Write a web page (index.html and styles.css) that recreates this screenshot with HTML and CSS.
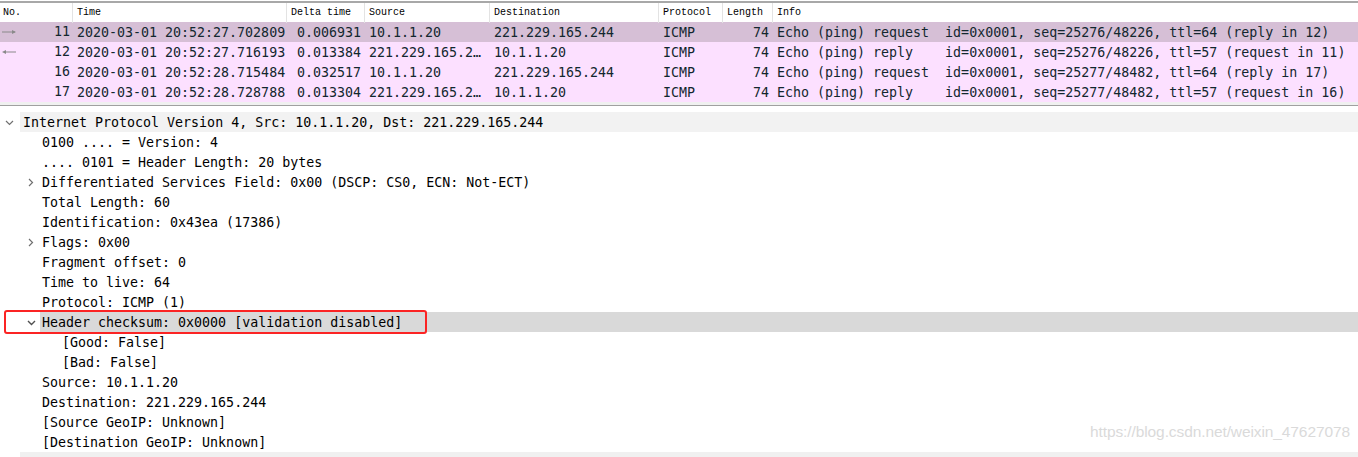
FILE: index.html
```html
<!DOCTYPE html>
<html>
<head>
<meta charset="utf-8">
<link rel="stylesheet" href="styles.css">
</head>
<body>
<div class="packets">
  <div class="topline"></div>
  <div class="grid phead">
    <div class="hc">No.</div>
    <div class="hc">Time</div>
    <div class="hc">Delta time</div>
    <div class="hc">Source</div>
    <div class="hc">Destination</div>
    <div class="hc">Protocol</div>
    <div class="hc">Length</div>
    <div class="hc">Info</div>
  </div>
  <div class="grid prow sel">
    <div class="c no"><svg class="rel" width="18" height="8" viewBox="0 0 18 8"><path d="M2 4H15" stroke="#8a8a8a" stroke-width="1"/><path d="M12 2L16 4L12 6Z" fill="#8a8a8a"/></svg><span>11</span></div>
    <div class="c">2020-03-01 20:52:27.702809</div>
    <div class="c r">0.006931</div>
    <div class="c">10.1.1.20</div>
    <div class="c">221.229.165.244</div>
    <div class="c">ICMP</div>
    <div class="c r">74</div>
    <div class="c info">Echo (ping) request  id=0x0001, seq=25276/48226, ttl=64 (reply in 12)</div>
  </div>
  <div class="grid prow">
    <div class="c no"><svg class="rel" width="18" height="8" viewBox="0 0 18 8"><path d="M4 4H16" stroke="#8a8a8a" stroke-width="1"/><path d="M6 2L2 4L6 6Z" fill="#8a8a8a"/></svg><span>12</span></div>
    <div class="c">2020-03-01 20:52:27.716193</div>
    <div class="c r">0.013384</div>
    <div class="c">221.229.165.2…</div>
    <div class="c">10.1.1.20</div>
    <div class="c">ICMP</div>
    <div class="c r">74</div>
    <div class="c info">Echo (ping) reply    id=0x0001, seq=25276/48226, ttl=57 (request in 11)</div>
  </div>
  <div class="grid prow">
    <div class="c no"><span>16</span></div>
    <div class="c">2020-03-01 20:52:28.715484</div>
    <div class="c r">0.032517</div>
    <div class="c">10.1.1.20</div>
    <div class="c">221.229.165.244</div>
    <div class="c">ICMP</div>
    <div class="c r">74</div>
    <div class="c info">Echo (ping) request  id=0x0001, seq=25277/48482, ttl=64 (reply in 17)</div>
  </div>
  <div class="grid prow">
    <div class="c no"><span>17</span></div>
    <div class="c">2020-03-01 20:52:28.728788</div>
    <div class="c r">0.013304</div>
    <div class="c">221.229.165.2…</div>
    <div class="c">10.1.1.20</div>
    <div class="c">ICMP</div>
    <div class="c r">74</div>
    <div class="c info">Echo (ping) reply    id=0x0001, seq=25277/48482, ttl=57 (request in 16)</div>
  </div>
  <div class="pfoot"></div>
</div>
<div class="split"></div>
<div class="tree">
  <div class="tr l0"><div class="br"><span class="tog"><svg width="9" height="6" viewBox="0 0 9 6"><path d="M1 1L4.5 4.5L8 1" fill="none" stroke="#707070" stroke-width="1.2"/></svg></span></div><div class="lb hov">Internet Protocol Version 4, Src: 10.1.1.20, Dst: 221.229.165.244</div></div>
  <div class="tr l1"><div class="br"></div><div class="lb">0100 .... = Version: 4</div></div>
  <div class="tr l1"><div class="br"></div><div class="lb">.... 0101 = Header Length: 20 bytes</div></div>
  <div class="tr l1"><div class="br"><span class="tog"><svg width="6" height="9" viewBox="0 0 6 9"><path d="M1 1L4.5 4.5L1 8" fill="none" stroke="#707070" stroke-width="1.2"/></svg></span></div><div class="lb">Differentiated Services Field: 0x00 (DSCP: CS0, ECN: Not-ECT)</div></div>
  <div class="tr l1"><div class="br"></div><div class="lb">Total Length: 60</div></div>
  <div class="tr l1"><div class="br"></div><div class="lb">Identification: 0x43ea (17386)</div></div>
  <div class="tr l1"><div class="br"><span class="tog"><svg width="6" height="9" viewBox="0 0 6 9"><path d="M1 1L4.5 4.5L1 8" fill="none" stroke="#707070" stroke-width="1.2"/></svg></span></div><div class="lb">Flags: 0x00</div></div>
  <div class="tr l1"><div class="br"></div><div class="lb">Fragment offset: 0</div></div>
  <div class="tr l1"><div class="br"></div><div class="lb">Time to live: 64</div></div>
  <div class="tr l1"><div class="br"></div><div class="lb">Protocol: ICMP (1)</div></div>
  <div class="tr l1 mark"><div class="br"><span class="tog"><svg width="9" height="6" viewBox="0 0 9 6"><path d="M1 1L4.5 4.5L8 1" fill="none" stroke="#505050" stroke-width="1.4"/></svg></span></div><div class="lb selb">Header checksum: 0x0000 [validation disabled]</div><div class="redbox"></div></div>
  <div class="tr l2"><div class="br"></div><div class="lb">[Good: False]</div></div>
  <div class="tr l2"><div class="br"></div><div class="lb">[Bad: False]</div></div>
  <div class="tr l1"><div class="br"></div><div class="lb">Source: 10.1.1.20</div></div>
  <div class="tr l1"><div class="br"></div><div class="lb">Destination: 221.229.165.244</div></div>
  <div class="tr l1"><div class="br"></div><div class="lb">[Source GeoIP: Unknown]</div></div>
  <div class="tr l1"><div class="br"></div><div class="lb">[Destination GeoIP: Unknown]</div></div>
  <div class="hscroll"></div>
  <div class="watermark">https://blog.csdn.net/weixin_47627078</div>
</div>
</body>
</html>
```
FILE: styles.css
```css
html, body {
  margin: 0;
  padding: 0;
  background: #ffffff;
  width: 1358px;
  height: 457px;
  overflow: hidden;
}
.packets {
  padding-top: 1px;
}
.topline {
  height: 2px;
  background: #a8a8a8;
}
.grid {
  display: grid;
  grid-template-columns: 72px 214px 78px 125px 169px 64px 50px 1fr;
}
.phead {
  height: 19px;
  background: #ffffff;
  font-family: "Liberation Mono", "DejaVu Sans Mono", monospace;
  font-size: 10px;
  color: #000;
}
.hc {
  border-left: 1px solid #e3e3e3;
  padding-left: 4px;
  line-height: 20px;
  white-space: pre;
}
.hc:first-child {
  border-left: none;
  padding-left: 3px;
}
.prow {
  height: 20px;
  background: #fce0ff;
  font-family: "DejaVu Sans Mono", monospace;
  font-size: 13.3px;
  color: #12272e;
  line-height: 22px;
}
.prow.sel {
  background: #d6bfd6;
}
.c {
  padding-left: 5px;
  white-space: pre;
  overflow: hidden;
}
.c.r {
  text-align: right;
  padding-left: 0;
  padding-right: 3px;
}
.c.no {
  display: flex;
  align-items: center;
  justify-content: space-between;
  padding-left: 0;
  padding-right: 2px;
}
.c.no span {
  margin-left: auto;
}
.rel {
  display: block;
  margin-left: 0;
}
.pfoot {
  height: 3px;
  background: #f0f0f0;
}
.split {
  height: 1px;
  background: #a0a0a0;
}
.tree {
  position: relative;
  padding-top: 6px;
  font-family: "DejaVu Sans Mono", monospace;
  font-size: 13.3px;
  color: #000;
}
.tr {
  display: flex;
  height: 20px;
  line-height: 22px;
  position: relative;
}
.br {
  display: flex;
  justify-content: flex-end;
  flex: none;
}
.l0 .br { width: 20px; }
.l1 .br { width: 40px; }
.l2 .br { width: 60px; }
.tog {
  width: 20px;
  display: flex;
  align-items: center;
  justify-content: center;
  padding-right: 2px;
  padding-top: 1px;
  box-sizing: border-box;
}
.l1 .tog {
  padding-right: 0;
  padding-left: 2px;
}
.tog svg { display: block; }
.lb {
  flex: 1;
  height: 20px;
  padding-left: 3px;
  white-space: pre;
}
.l1 .lb { padding-left: 2px; }
.l2 .lb { padding-left: 2px; }
.lb.hov {
  background: #f2f2f2;
}
.lb.selb {
  background: #d9d9d9;
}
.redbox {
  position: absolute;
  left: 4px;
  top: -2px;
  width: 423px;
  height: 24px;
  border: 2.5px solid #fb2424;
  border-radius: 3px;
  box-sizing: border-box;
}
.hscroll {
  margin-left: 20px;
  height: 5px;
  background: #f0f0f0;
}
.watermark {
  position: absolute;
  right: 8px;
  top: 317px;
  font-family: "Liberation Sans", Arial, sans-serif;
  font-size: 15.5px;
  color: #dadada;
  letter-spacing: -0.1px;
}
```
